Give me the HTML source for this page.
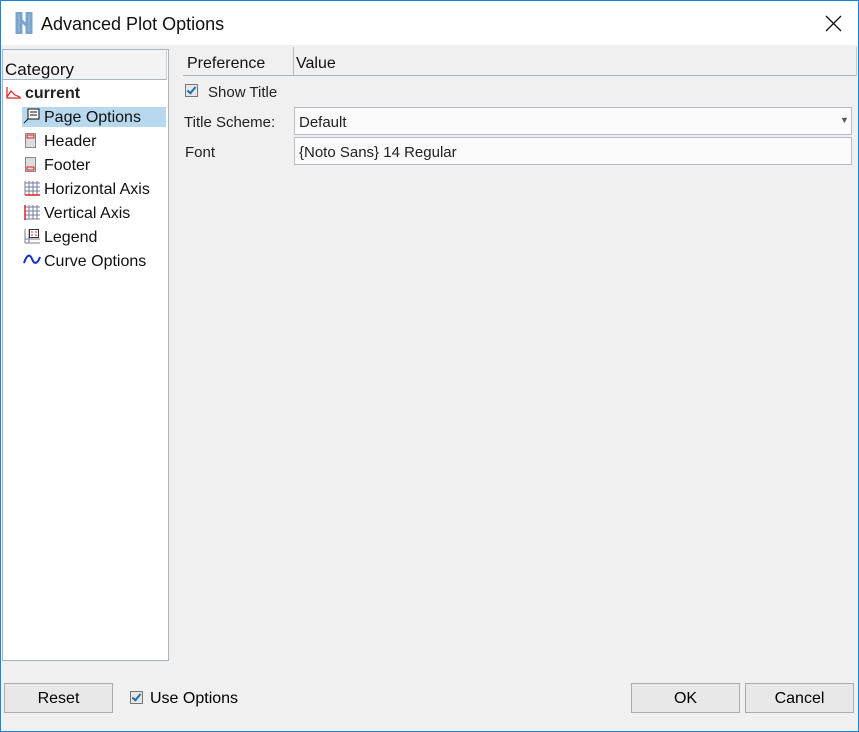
<!DOCTYPE html>
<html><head><style>
body{margin:0;width:859px;height:732px;overflow:hidden;background:#f0f0f0;font-family:"Liberation Sans",sans-serif;font-size:15px;color:#000;position:relative}
.abs{position:absolute}
.win{position:absolute;left:0;top:0;width:857px;height:730px;border:1px solid #1883d7}
.tb{left:1px;top:1px;width:857px;height:44px;background:#fff}
.item{position:absolute;left:44px;font-size:16px;color:#111}
.btn{position:absolute;top:683px;height:28px;border:1px solid #adadad;background:#e8e8e8;text-align:center;line-height:29px;font-size:16px}
.chk{position:absolute;width:11px;height:11px;border:1px solid #777;background:#e6e6e6}
.chk:after{content:"";position:absolute;left:3px;top:0px;width:3px;height:7px;border:solid #1a6fb0;border-width:0 2px 2px 0;transform:rotate(40deg)}
.lbl{position:absolute;font-size:15px;color:#222}
</style></head><body>
<div class="win"></div>
<div class="abs tb"></div>
<svg class="abs" style="left:15px;top:12px" width="18" height="22"><path d="M2 1h4v20H2zM12 1h4v20h-4zM6 8l6 6" stroke="#7aa4cc" stroke-width="3" fill="#9fbedc"/></svg>
<div class="abs" style="left:41px;top:14px;font-size:18px;color:#111">Advanced Plot Options</div>
<svg class="abs" style="left:825px;top:15px" width="17" height="17"><path d="M1 1L16 16M16 1L1 16" stroke="#111" stroke-width="1.3"/></svg>

<div class="abs" style="left:2px;top:49px;width:165px;height:610px;background:#fff;border:1px solid #a8b4c0"></div>
<div class="abs" style="left:3px;top:50px;width:163px;height:29px;background:#f3f3f3;border-bottom:1px solid #a8b4c0;border-right:1px solid #ccc"></div>
<div class="abs" style="left:5px;top:60px;font-size:17px;color:#111">Category</div>
<svg class="abs" style="left:6px;top:87px" width="16" height="12"><path d="M1 0v11h14M1 10l4-6 4 4 5 2" stroke="#d22" fill="none" stroke-width="1.2"/></svg>
<div class="abs" style="left:25px;top:85px;font-size:16px;font-weight:bold;color:#222">current</div>
<div class="abs" style="left:22px;top:107px;width:144px;height:20px;background:#b8d8ee"></div>
<svg class="abs" style="left:23px;top:108px" width="18" height="17"><rect x="5" y="1" width="11" height="10" fill="#fff" stroke="#111"/><path d="M7 4h7M7 7h7M5 11L1 15" stroke="#111"/></svg>
<div class="item" style="top:109px">Page Options</div>
<svg class="abs" style="left:25px;top:133px" width="12" height="16"><rect x="0.5" y="0.5" width="10" height="14" fill="#ddd" stroke="#888"/><rect x="2" y="2" width="7" height="3" fill="none" stroke="#d22"/></svg>
<div class="item" style="top:133px">Header</div>
<svg class="abs" style="left:25px;top:157px" width="12" height="16"><rect x="0.5" y="0.5" width="10" height="14" fill="#ddd" stroke="#888"/><rect x="2" y="10" width="7" height="3" fill="none" stroke="#d22"/></svg>
<div class="item" style="top:157px">Footer</div>
<svg class="abs" style="left:24px;top:180px" width="17" height="16"><path d="M1 1v14M5 1v14M9 1v14M13 1v14M1 3h15M1 7h15M1 11h15" stroke="#7a7aa0" stroke-width="1"/><path d="M1 15h15" stroke="#d22" stroke-width="1.5"/></svg>
<div class="item" style="top:181px">Horizontal Axis</div>
<svg class="abs" style="left:24px;top:204px" width="17" height="16"><path d="M5 1v14M9 1v14M13 1v14M1 3h15M1 7h15M1 11h15M1 15h15" stroke="#7a7aa0"/><path d="M1 1v15" stroke="#d22" stroke-width="1.5"/></svg>
<div class="item" style="top:205px">Vertical Axis</div>
<svg class="abs" style="left:24px;top:228px" width="17" height="16"><path d="M1 1v14M5 1v14M1 15h15M1 11h15" stroke="#7a7aa0"/><rect x="5.5" y="1.5" width="9" height="8" fill="#fff" stroke="#333"/><path d="M7 4h2M11 4h2M7 7h2M11 7h2" stroke="#d22"/></svg>
<div class="item" style="top:229px">Legend</div>
<svg class="abs" style="left:23px;top:254px" width="18" height="12"><path d="M1 9C4 0 7 0 9 5S14 11 17 3" stroke="#1530c8" stroke-width="2" fill="none"/></svg>
<div class="item" style="top:253px">Curve Options</div>

<div class="abs" style="left:183px;top:47px;width:673px;height:28px;border-bottom:1px solid #a8b4c0;border-right:1px solid #ccc"></div>
<div class="abs" style="left:293px;top:47px;width:1px;height:28px;background:#b0b8c0"></div>
<div class="abs" style="left:187px;top:55px;font-size:16px;color:#111">Preference</div>
<div class="abs" style="left:296px;top:55px;font-size:16px;color:#111">Value</div>
<div class="chk" style="left:185px;top:84px"></div>
<div class="lbl" style="left:208px;top:84px">Show Title</div>
<div class="lbl" style="left:184px;top:114px">Title Scheme:</div>
<div class="abs" style="left:294px;top:107px;width:556px;height:26px;border:1px solid #b8bec4;background:#fafafa"></div>
<div class="lbl" style="left:299px;top:114px">Default</div>
<div class="abs" style="left:840px;top:115px;font-size:9px;color:#555">&#9660;</div>
<div class="lbl" style="left:185px;top:144px">Font</div>
<div class="abs" style="left:294px;top:137px;width:556px;height:26px;border:1px solid #b8bec4;background:#fafafa"></div>
<div class="lbl" style="left:299px;top:144px">{Noto Sans} 14 Regular</div>

<div class="btn" style="left:4px;width:107px">Reset</div>
<div class="chk" style="left:130px;top:691px"></div>
<div class="abs" style="left:150px;top:690px;font-size:16px">Use Options</div>
<div class="btn" style="left:631px;width:107px">OK</div>
<div class="btn" style="left:745px;width:107px">Cancel</div>
</body></html>
